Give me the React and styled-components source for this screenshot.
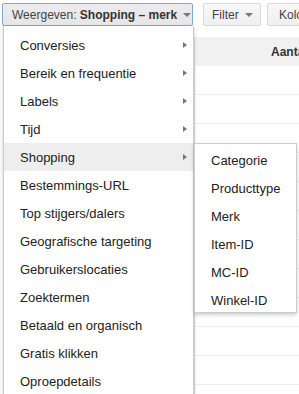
import React from "react";
import styled, { createGlobalStyle } from "styled-components";

const Global = createGlobalStyle`
  html, body { margin: 0; padding: 0; background: #fff; overflow: hidden; }
  body { font-family: "Liberation Sans", Arial, sans-serif; }
`;

const Page = styled.div`
  position: relative;
  width: 299px;
  height: 394px;
  overflow: hidden;
`;

const Toolbar = styled.div`
  display: flex;
  align-items: center;
  padding: 3px 0 0 2px;
  gap: 10px;
`;

const Button = styled.div`
  box-sizing: border-box;
  height: 23px;
  display: flex;
  align-items: center;
  gap: 6px;
  padding: 0 ${(p) => p.$pr || 9}px 0 ${(p) => p.$pl || 8}px;
  border: 1px solid ${(p) => (p.$active ? "#7ea6e0" : "#d9d9d9")};
  border-radius: 2px;
  background: ${(p) =>
    p.$active ? "linear-gradient(#ececec,#e6e6e6)" : "linear-gradient(#f7f7f7,#efefef)"};
  color: #444;
  font-size: 12px;
  white-space: nowrap;
  flex-shrink: 0;
  margin-left: ${(p) => p.$ml || 0}px;
  width: ${(p) => (p.$w ? p.$w + "px" : "auto")};
`;

const Bold = styled.b`
  color: #333;
`;

const Caret = styled.span`
  width: 0;
  height: 0;
  border-left: 4px solid transparent;
  border-right: 4px solid transparent;
  border-top: 4px solid #777;
  margin-top: 1px;
`;

const Table = styled.div`
  margin-top: 11px;
  margin-left: 194px;
  border-left: 1px solid #e0e0e0;
`;

const HeaderRow = styled.div`
  height: 29px;
  background: #f1f1f1;
  display: flex;
  align-items: center;
  padding-left: 76px;
  font-size: 12px;
  font-weight: bold;
  color: #333;
  white-space: nowrap;
`;

const Row = styled.div`
  height: 28px;
  border-bottom: 1px solid #ededed;
`;

const Menu = styled.div`
  position: absolute;
  left: 3px;
  top: 26px;
  width: 191px;
  box-sizing: border-box;
  background: #fff;
  border: 1px solid rgba(0, 0, 0, 0.2);
  border-top: none;
  box-shadow: 0 2px 4px rgba(0, 0, 0, 0.2);
  padding: 5px 0 6px;
`;

const Item = styled.div`
  position: relative;
  height: 28px;
  display: flex;
  align-items: center;
  padding-left: 16px;
  font-size: 13px;
  color: #222;
  background: ${(p) => (p.$hl ? "#eeeeee" : "transparent")};
  white-space: nowrap;
`;

const Arrow = styled.span`
  position: absolute;
  right: 6px;
  top: 11px;
  width: 0;
  height: 0;
  border-top: 3px solid transparent;
  border-bottom: 3px solid transparent;
  border-left: 4px solid #777;
`;

const SubMenu = styled.div`
  position: absolute;
  left: 194px;
  top: 143px;
  width: 103px;
  box-sizing: border-box;
  background: #fff;
  border: 1px solid rgba(0, 0, 0, 0.2);
  box-shadow: 0 2px 4px rgba(0, 0, 0, 0.2);
  padding: 2px 0 0;
  height: 170px;
`;

const menuItems = [
  ["Conversies", true],
  ["Bereik en frequentie", true],
  ["Labels", true],
  ["Tijd", true],
  ["Shopping", true, true],
  ["Bestemmings-URL"],
  ["Top stijgers/dalers"],
  ["Geografische targeting"],
  ["Gebruikerslocaties"],
  ["Zoektermen"],
  ["Betaald en organisch"],
  ["Gratis klikken"],
  ["Oproepdetails"],
];

const subItems = ["Categorie", "Producttype", "Merk", "Item-ID", "MC-ID", "Winkel-ID"];

export default function App() {
  return (
    <Page>
      <Global />
      <Toolbar>
        <Button $active $w={191} $pl={9}>
          <span>
            Weergeven: <Bold>Shopping – merk</Bold>
          </span>
          <Caret />
        </Button>
        <Button $w={58}>
          <span>Filter</span>
          <Caret />
        </Button>
        <Button $ml={-4} $pl={11}>
          <span>Kolommen</span>
          <Caret />
        </Button>
      </Toolbar>
      <Table>
        <HeaderRow>Aantal klikken</HeaderRow>
        {Array.from({ length: 12 }).map((_, i) => (
          <Row key={i} />
        ))}
      </Table>
      <Menu>
        {menuItems.map(([label, sub, hl]) => (
          <Item key={label} $hl={hl}>
            {label}
            {sub && <Arrow />}
          </Item>
        ))}
      </Menu>
      <SubMenu>
        {subItems.map((s) => (
          <Item key={s}>{s}</Item>
        ))}
      </SubMenu>
    </Page>
  );
}
